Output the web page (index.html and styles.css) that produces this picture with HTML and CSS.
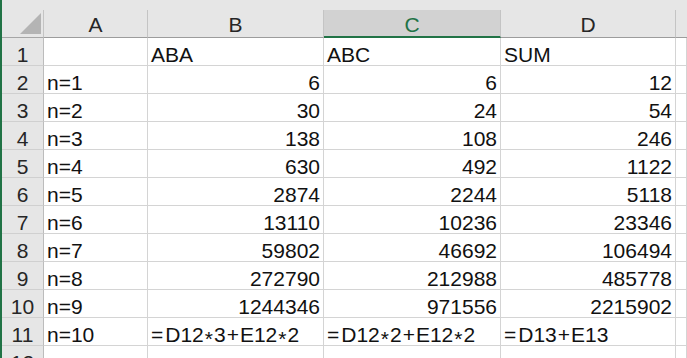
FILE: index.html
```html
<!DOCTYPE html>
<html>
<head>
<meta charset="utf-8">
<link rel="stylesheet" href="styles.css">
</head>
<body>
<div class="window">
  <div class="topstrip"></div>
  <div class="sheet">
    <div class="corner"><div class="tri"></div></div>
    <div class="ch">A</div>
    <div class="ch">B</div>
    <div class="ch sel">C</div>
    <div class="ch">D</div>
    <div class="ch rest"></div>

    <div class="rh">1</div><div class="c"></div><div class="c">ABA</div><div class="c">ABC</div><div class="c">SUM</div><div class="c"></div>
    <div class="rh">2</div><div class="c">n=1</div><div class="c num">6</div><div class="c num">6</div><div class="c num">12</div><div class="c"></div>
    <div class="rh">3</div><div class="c">n=2</div><div class="c num">30</div><div class="c num">24</div><div class="c num">54</div><div class="c"></div>
    <div class="rh">4</div><div class="c">n=3</div><div class="c num">138</div><div class="c num">108</div><div class="c num">246</div><div class="c"></div>
    <div class="rh">5</div><div class="c">n=4</div><div class="c num">630</div><div class="c num">492</div><div class="c num">1122</div><div class="c"></div>
    <div class="rh">6</div><div class="c">n=5</div><div class="c num">2874</div><div class="c num">2244</div><div class="c num">5118</div><div class="c"></div>
    <div class="rh">7</div><div class="c">n=6</div><div class="c num">13110</div><div class="c num">10236</div><div class="c num">23346</div><div class="c"></div>
    <div class="rh">8</div><div class="c">n=7</div><div class="c num">59802</div><div class="c num">46692</div><div class="c num">106494</div><div class="c"></div>
    <div class="rh">9</div><div class="c">n=8</div><div class="c num">272790</div><div class="c num">212988</div><div class="c num">485778</div><div class="c"></div>
    <div class="rh">10</div><div class="c">n=9</div><div class="c num">1244346</div><div class="c num">971556</div><div class="c num">2215902</div><div class="c"></div>
    <div class="rh">11</div><div class="c">n=10</div><div class="c"><span class="f"><span class="eq">=</span>D12<span class="op star">*</span>3<span class="op">+</span>E12<span class="op star">*</span>2</span></div><div class="c"><span class="f"><span class="eq">=</span>D12<span class="op star">*</span>2<span class="op">+</span>E12<span class="op star">*</span>2</span></div><div class="c"><span class="f"><span class="eq">=</span>D13<span class="op">+</span>E13</span></div><div class="c"></div>
    <div class="rh">12</div><div class="c"></div><div class="c"></div><div class="c"></div><div class="c"></div><div class="c"></div>
  </div>
</div>
</body>
</html>
```
FILE: styles.css
```css
html, body {
  margin: 0;
  padding: 0;
  background: #ffffff;
}
body {
  width: 687px;
  height: 358px;
  overflow: hidden;
  font-family: "Liberation Sans", Arial, sans-serif;
  font-size: 21px;
  color: #1a1a1a;
}
.window {
  border-left: 2px solid #217346;
  height: 358px;
  box-sizing: border-box;
}
.topstrip {
  height: 10px;
  background: #e6e6e6;
}
.sheet {
  display: grid;
  grid-template-columns: 42px 104px 176px 177px 175px 1fr;
  grid-auto-rows: 28px;
}
.sheet > div {
  box-sizing: border-box;
  border-right: 1px solid #d4d4d4;
  border-bottom: 1px solid #d4d4d4;
  display: flex;
  align-items: flex-end;
  line-height: 21px;
  white-space: nowrap;
}
.corner {
  background: #e6e6e6;
  justify-content: flex-end;
  border-right-color: #c4c4c4 !important;
  border-bottom-color: #a6a6a6 !important;
}
.tri {
  width: 21px;
  height: 21px;
  margin: 0 2px 3px 0;
  background: #b4b4b4;
  clip-path: polygon(100% 0, 100% 100%, 0 100%);
}
.ch {
  background: #e6e6e6;
  justify-content: center;
  padding-bottom: 2px;
  color: #262626;
  border-right-color: #c4c4c4 !important;
  border-bottom-color: #9c9c9c !important;
}
.ch.sel {
  background: #d2d2d2;
  color: #217346;
  border-bottom: 2px solid #217346 !important;
  padding-bottom: 1px;
}
.ch.rest {
  border-right: none !important;
}
.rh {
  background: #e6e6e6;
  justify-content: center;
  color: #262626;
  border-right-color: #bcbcbc !important;
  border-bottom-color: #d0d0d0 !important;
}
.c {
  padding: 0 3px;
  color: #111111;
}
.num {
  justify-content: flex-end;
}
.f {
  display: block;
  line-height: 21px;
}
.eq {
  margin-right: 2px;
}
.op {
  margin: 0 1px;
}
.star {
  display: inline-block;
  line-height: 12px;
  transform: translateY(0.18em);
}
```
